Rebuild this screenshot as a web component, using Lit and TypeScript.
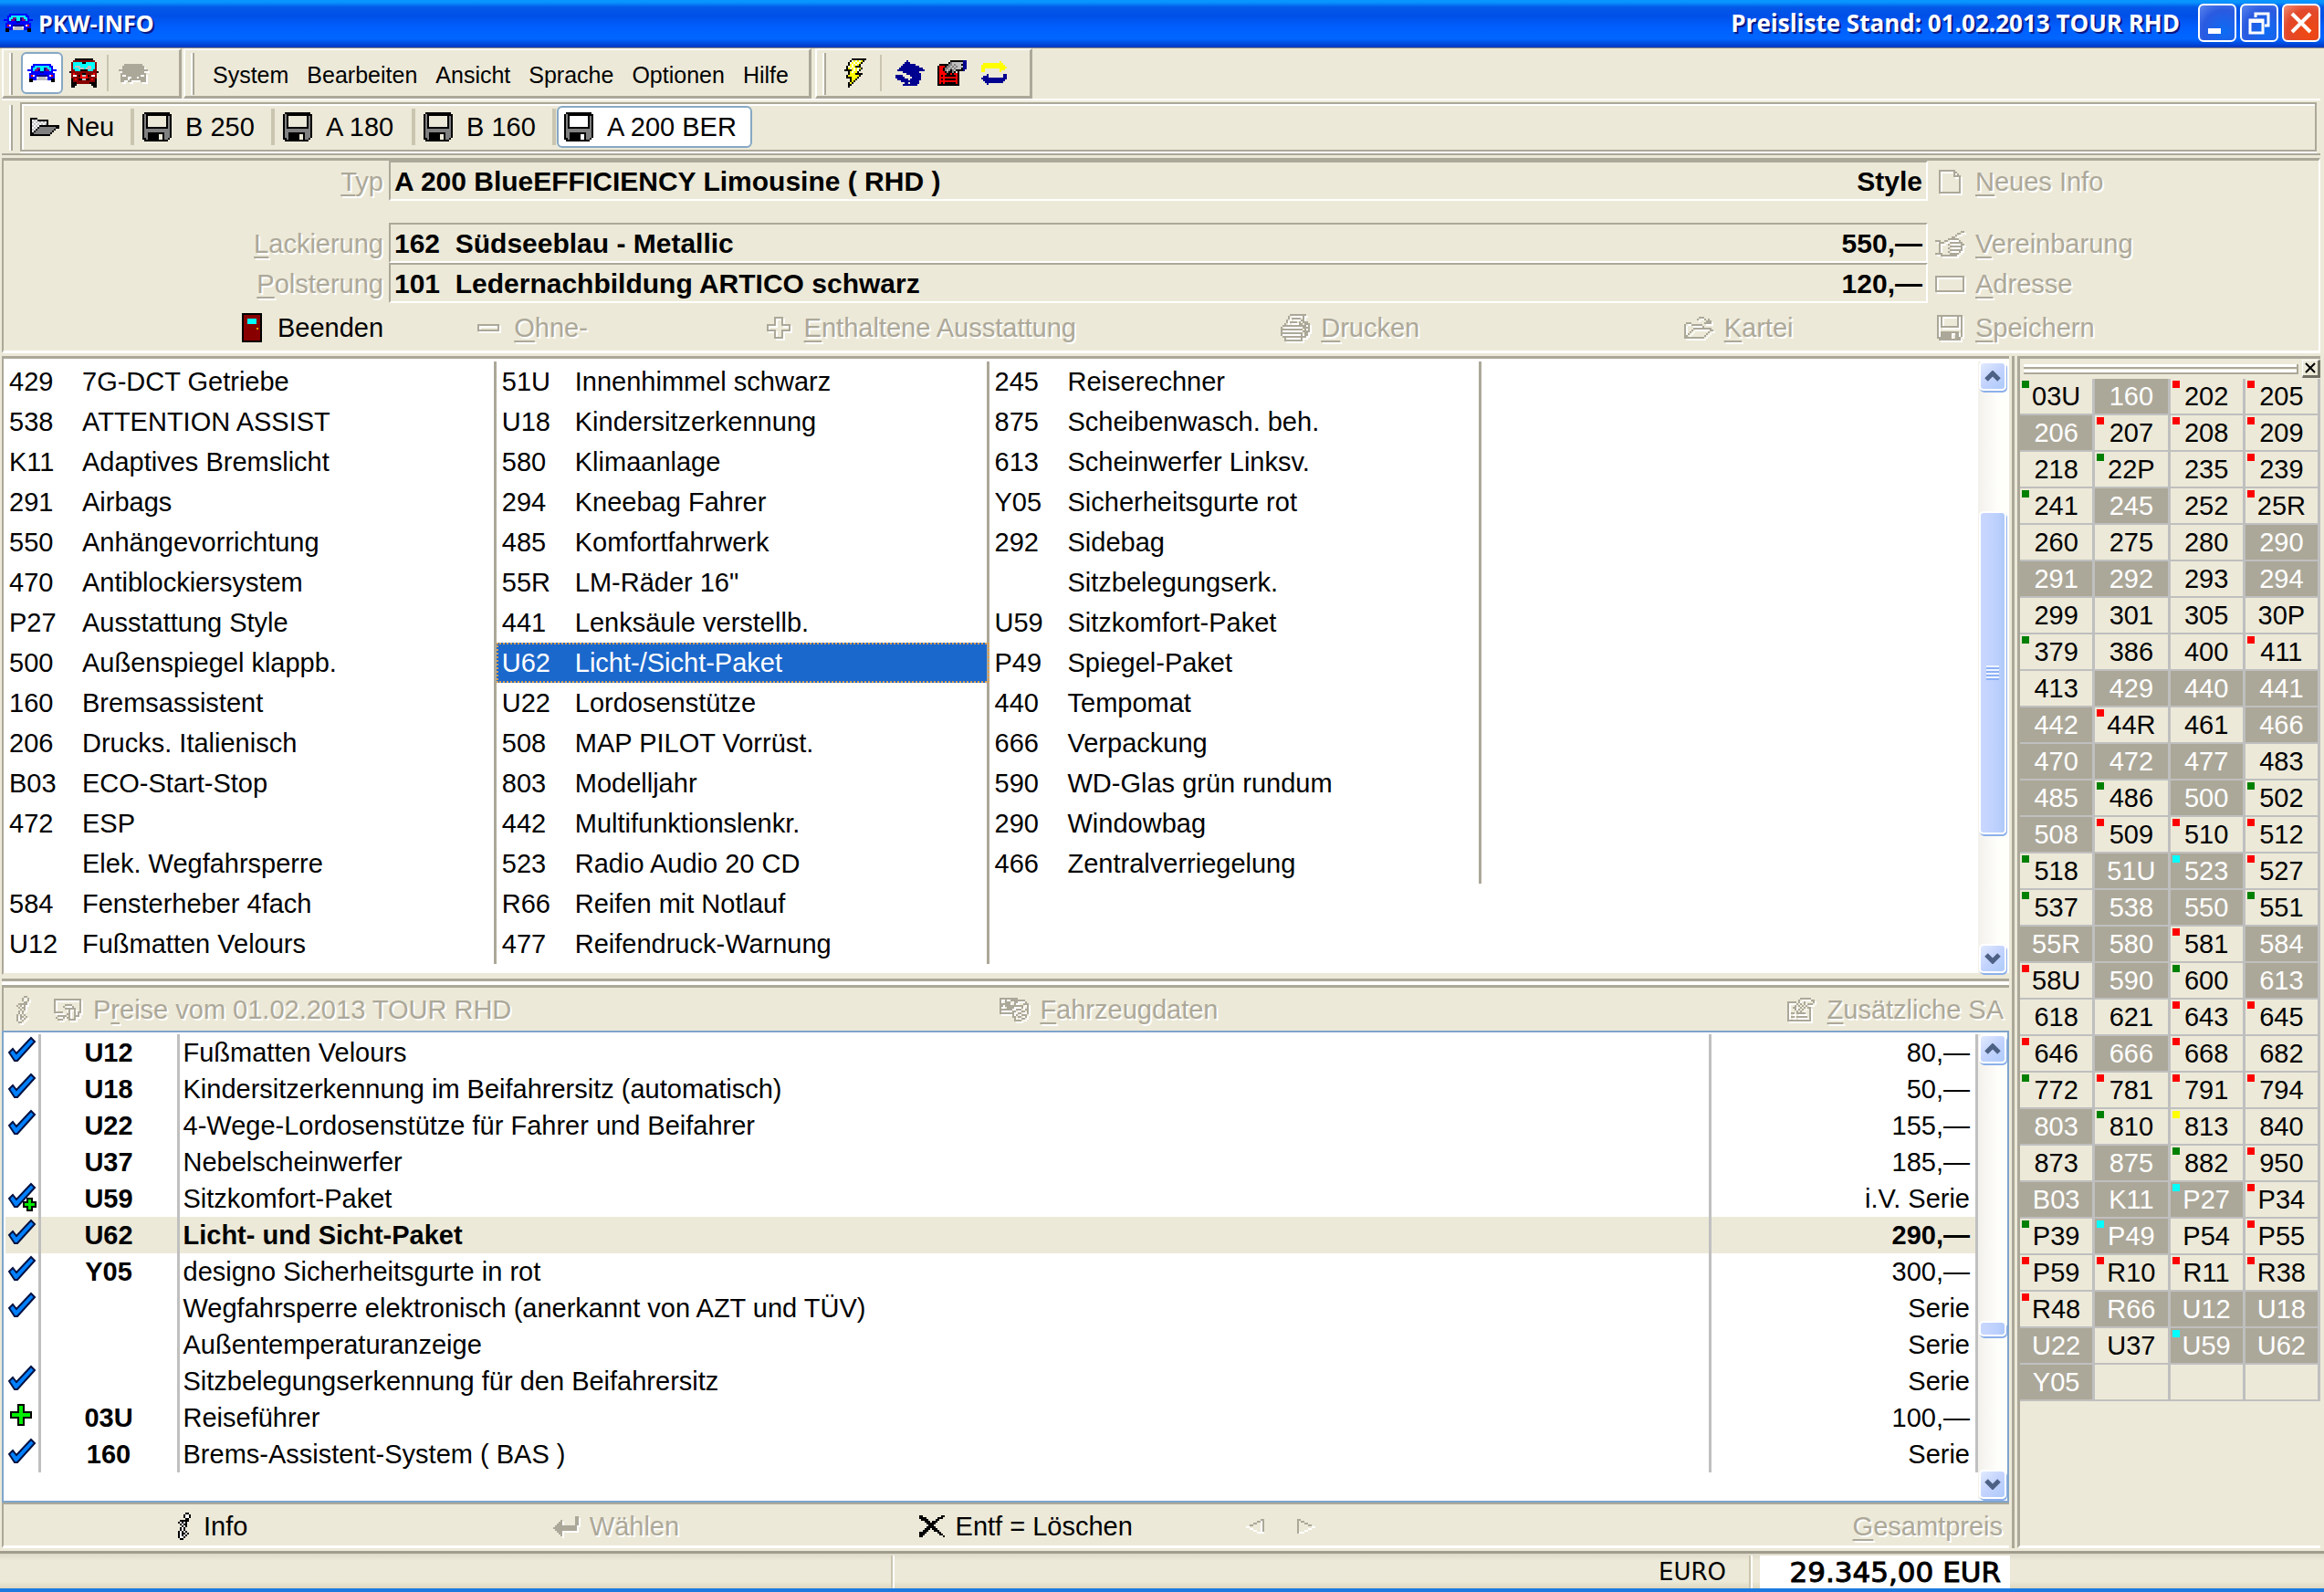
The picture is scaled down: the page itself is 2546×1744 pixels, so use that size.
import { LitElement, html, css, svg, nothing } from "lit";
import { customElement, property, state } from "lit/decorators.js";
import { classMap } from "lit/directives/class-map.js";

/* Pixel icons: one character per pixel, "." is transparent. */
const PALETTE: Record<string, string> = {
  k: "#000000", b: "#0000ff", c: "#00ffff", m: "#800080", r: "#ff0000", d: "#880000",
  w: "#ffffff", g: "#aca899", s: "#808080", l: "#c0c0c0", n: "#000090", y: "#ffff00", o: "#e8a000",
};

const BITMAPS: Record<string, string[]> = {
  car: [
    "...bbbbbbbbbb...",
    "..bbccccccccbb..",
    "..bccmmccnmccb..",
    "bbbcmmnccnmmcbbb",
    "..bbbbbnnbbbbb..",
    ".bbbbbbbbbbbbbb.",
    ".brwbnnnnnnbwrb.",
    ".bbbbwllllwbbbb.",
    ".kkbbllllllbbkk.",
    ".kk..........kk.",
  ],
  bus: [
    "...kkkkkkkkkk...",
    "..dddddddddddd..",
    ".dccccckkcccccd.",
    ".dccccccccccccd.",
    ".dclllccccllccd.",
    ".dccclllclllccd.",
    ".ddccckkkkcccdd.",
    "kddddddddddddddk",
    ".drddddkkddddrd.",
    ".dwwdkrllrkdwwd.",
    ".dddddrrrrddddd.",
    ".kdrdkkllkkdrdk.",
    ".kddddddddddddk.",
    ".kkkdddddddkkkk.",
    ".kkk........kkk.",
    ".kk..........kk.",
  ],
  van: [
    "...gggggggggg...",
    "..gggggggggggg..",
    "..gggggggggggg..",
    "gggggggggggggggg",
    "..gggggggggggg..",
    ".gggggggggggggg.",
    ".g..gggggggg..g.",
    ".gggg..ggg.gggg.",
    ".gggg.ggggggggg.",
    ".gg..gg.....ggg.",
  ],
  folder: [
    "kkkk............",
    "kwlwkkkkkk......",
    "klwlwlwlwk......",
    "kwlwlwlwlk......",
    "klwlwkkkkkkkkkkk",
    "kwlwkssssssssskk",
    "klwksssssssssk..",
    "kwksssssssssk...",
    "kksssssssssk....",
    "kkkkkkkkkkk.....",
  ],
  floppy: [
    ".kkkkkkkkkkkkkk.",
    "kskkkkkkkkkkkkkk",
    "ksk..........ksk",
    "ksk..........ksk",
    "ksk..........ksk",
    "ksk..........ksk",
    "ksk..........ksk",
    "ksk..........ksk",
    "kskkkkkkkkkkkksk",
    "kssssssssssssssk",
    "kssssssssssssssk",
    "ksskkkkkkkkksssk",
    "ksskkkkkk..ksssk",
    "ksskkkkkk..ksssk",
    "kkskkkkkk..kssk.",
    ".kkkkkkkkkkkkk..",
  ],
  flash: [
    "....kkkkkkkk",
    "...kwywywyk.",
    "..kwywywyk..",
    "..kywywyk...",
    ".kwywykkk...",
    ".kywywywyk..",
    "kkkkywywk...",
    "..kywyyk....",
    "..kyyykkkk..",
    ".kyyyyyyk...",
    ".kkkyyyk....",
    "...kyyk.....",
    "...kyk......",
    "..kyk.......",
    "..kk........",
    "..k.........",
  ],
  redo: [
    "......n.........",
    ".....nnn........",
    "....nnnnnnn.....",
    "...nnnnnnnnnn...",
    "..nnnnnnnnnnnnn.",
    ".nnnnnnnnnnnnnnn",
    "....nnnnnnnnn...",
    "......nnnnnnnn..",
    "nnnn....nnnnnn..",
    "nnnnn....nnnnn..",
    ".nnnnnn.nnnnnn..",
    "...nnnnnnnnnn...",
    ".....nn.nnnnn...",
    "....nnnnnnnn....",
  ],
  note: [
    ".......kkkkkkknn",
    "......ksllllllnn",
    ".kkkkksslslllknn",
    "krrrksslslslllnn",
    "krrksslslslllknn",
    "krrkslskslkkkkn.",
    "krrrkskksk.k....",
    "krrrrkkrkrrk....",
    "krkrkkkkkkrk....",
    "krrrrrrrrrrk....",
    "krkrkkkkkkrk....",
    "krrrrrrrrrrk....",
    "krkrkkkkkkrk....",
    "kkkkkkkkkkkk....",
  ],
  swap: [
    "..........y...",
    ".yyyyyyyyyyy..",
    "yyyyyyyyyyyyy.",
    "yyyyyyyyyyyyyy",
    "yy........yyy.",
    "yy........y...",
    "..............",
    "...n........nn",
    ".nnn........nn",
    "nnnnnnnnnnnnnn",
    ".nnnnnnnnnnnn.",
    "..nnnnnnnnnn..",
    "...n..........",
  ],
  door: [
    "kkkkkkkkkkk",
    "kdddddddddk",
    "kdddddddddk",
    "kddcccccddk",
    "kddcccccddk",
    "kddcccccddk",
    "kdddddddddk",
    "kdddddddddk",
    "kdddddddodk",
    "kdddddddddk",
    "kdddddddddk",
    "kdddddddddk",
    "kdddddddddk",
    "kdddddddddk",
    "kdddddddddk",
    "kkkkkkkkkkk",
  ],
  minus: ["gggggggggggg", "g..........g", "g..........g", "gggggggggggg"],
  plus: [
    "....ggggg....",
    "....g...g....",
    "....g...g....",
    "....g...g....",
    "ggggg...ggggg",
    "g...........g",
    "g...........g",
    "ggggg...ggggg",
    "....g...g....",
    "....g...g....",
    "....g...g....",
    "....ggggg....",
  ],
  printer: [
    ".....ggggggggg..",
    "....g.......g...",
    "....g.ggggg.g...",
    "...g.......gg...",
    "...g.gggg.g.ggg.",
    "..g.......gg.ggg",
    ".ggggggggggggg.g",
    "g...........gggg",
    "gggggggggggg.g.g",
    "g...........gggg",
    "gggggggggggg.gg.",
    "g..........g.gg.",
    ".ggggggggggggg..",
    "..g........g....",
    "..gggggggggg....",
  ],
  index: [
    "........ggg.....",
    ".......g...g.g..",
    "............ggg.",
    ".ggg.......gggg.",
    "g...gggggg......",
    "g.........g.....",
    "g....gggggggggg.",
    "g...g.........gg",
    "g..g.........g..",
    "g.g.........g...",
    "gg.........g....",
    "ggggggggggg.....",
  ],
  page: [
    "ggggggggg...",
    "g.......gg..",
    "g.......g.g.",
    "g.......gggg",
    "g..........g",
    "g..........g",
    "g..........g",
    "g..........g",
    "g..........g",
    "g..........g",
    "g..........g",
    "g..........g",
    "gggggggggggg",
  ],
  hand: [
    "..............gg",
    "............gg..",
    "...........g....",
    ".........gg.....",
    ".......gggggg...",
    "ggg..gg......g..",
    "..ggg...ggggggg.",
    "..g....g......gg",
    "..g.....ggggggg.",
    "..g....g......g.",
    "..g.....ggggggg.",
    "..g....g.....g..",
    "gggg....ggggg...",
    "...ggggggggg....",
  ],
  card: [
    "gggggggggggggggg",
    "g..............g",
    "g..............g",
    "g..............g",
    "g..............g",
    "g..............g",
    "g..............g",
    "g..............g",
    "gggggggggggggggg",
  ],
  disk: [
    "gggggggggggggg",
    "g.g........g.g",
    "g.g........g.g",
    "g.g........g.g",
    "g.g........g.g",
    "g.g........g.g",
    "g.gggggggggg.g",
    "g............g",
    "g............g",
    "g.gggggggggg.g",
    "g.gggggg..gg.g",
    "g.gggggg..gg.g",
    "gggggggg..ggg.",
    ".gggggggggggg.",
  ],
  money: [
    "ggggggggggggggg",
    "g.............g",
    "g.............g",
    "g.....gggg....g",
    "g....g....g...g",
    "g.....gggggg..g",
    "g.......g..g..g",
    "ggggg...g..g.gg",
    ".......gg..g.g.",
    "..ggggg.g..ggg.",
    ".g...g.gg..g...",
    "..ggg...gggg...",
  ],
  photos: [
    "gggggggggg......",
    "g..g..gggggggg..",
    "g..ggg..gg....g.",
    "gggggg..g....ggg",
    "gg.gggggggggg..g",
    "g...gggg....g..g",
    "ggggggg..ggg..gg",
    "g......gg...gg.g",
    "gggggggg..gg...g",
    ".......g.g..ggg.",
    ".......gg.gg..g.",
    "........g...gg..",
    "........gggg....",
  ],
  sheet: [
    ".......gggggg...",
    "......g......gg.",
    "ggggg.g..g....g.",
    "g....g.g.g.ggg..",
    "g...g.g.g.g.....",
    "g..gg..g.g.gg...",
    "g...g.g.g...g...",
    "g....g.g....g...",
    "g.gg.ggggg..g...",
    "g...........g...",
    "g.gg.gggggg.g...",
    "g...........g...",
    "ggggggggggggg...",
  ],
  info: [
    ".....kk..",
    "....kwwk.",
    "....kwwk.",
    ".....kk..",
    "..kkkkk..",
    ".kwkwk...",
    "..kwkk...",
    "...kwk...",
    "..kwk....",
    "..kwk....",
    ".kwk.k...",
    ".kwkkwk..",
    ".kwkwk...",
    ".kwwk....",
    "..kk.....",
  ],
  enter: [
    "............gg",
    "............gg",
    "....g.......gg",
    "...gg.......gg",
    "..ggg.......gg",
    ".gggggggggggg.",
    "ggggggggggggg.",
    ".gggggggggggg.",
    "..ggg.........",
    "...gg.........",
    "....g.........",
  ],
  cross: [
    "kk..........kk",
    "kkkk......kkk.",
    ".kkkk....kk...",
    "...kkk.kkk....",
    "....kkkkk.....",
    ".....kkk......",
    "....kkkkk.....",
    "...kkk.kkk....",
    "..kkk...kkk...",
    "kkkk......kk..",
    "kkk........kk.",
    "kk...........k",
  ],
  left: ["........gg", "......ggwg", "....gg..wg", "..gg....wg", "ww......wg", "..ww....wg", "....ww..wg", "......wwww"],
  right: ["gg........", "g.gg......", "g...gg....", "g.....gg..", "g.......ww", "g.....ww..", "g...ww....", "gwww......"],
};

function bitmap(name: string, className = "") {
  const rows = BITMAPS[name];
  const paths: Record<string, string> = {};
  rows.forEach((row, y) => {
    for (let x = 0; x < row.length; ) {
      const ch = row[x];
      let end = x + 1;
      while (end < row.length && row[end] === ch) end++;
      if (ch !== ".") paths[ch] = (paths[ch] ?? "") + `M${x} ${y}h${end - x}v1h-${end - x}z`;
      x = end;
    }
  });
  const w = Math.max(...rows.map((r) => r.length));
  return html`<svg class="bmp ${className}" width=${w * 2} height=${rows.length * 2} viewBox="0 0 ${w} ${rows.length}"
    shape-rendering="crispEdges" aria-hidden="true">
    ${Object.entries(paths).map(([ch, d]) => svg`<path class="ink-${ch}" fill=${PALETTE[ch]} d=${d}></path>`)}
  </svg>`;
}

const check = (plus = false) => html`<svg class="mark" width="34" height="32" viewBox="0 0 34 32" aria-hidden="true">
  <path d="M4 18L8 14L12 19L28 2L32 6L13 27H10Z" fill="#0080ff" stroke="#001040" stroke-width="2"></path>
  ${plus ? svg`<path d="M24 18h5v4h4v5h-4v4h-5v-4h-4v-5h4z" fill="#00e800" stroke="#000" stroke-width="2"></path>` : nothing}
</svg>`;

const addMark = html`<svg class="mark" width="34" height="32" viewBox="0 0 34 32" aria-hidden="true">
  <path d="M14 4h6v8h8v6h-8v8h-6v-8H6v-6h8z" fill="#00f000" stroke="#000" stroke-width="2"></path>
</svg>`;

const shared = css`
  .bmp { display: block; flex: none; }
  .off { color: #aca899; text-shadow: 2px 2px 0 #fff; }
  .off .bmp, .bmp.off { filter: drop-shadow(2px 2px 0 #fff); }
  .dim .ink-k { fill: #aca899; }
  .dim .ink-w { fill: none; }
  button, input, output {
    font: inherit; color: inherit; margin: 0; padding: 0; border: 0; background: none; border-radius: 0;
  }
  u { text-decoration-thickness: 2px; text-underline-offset: 4px; text-decoration-skip-ink: none; }
`;

/* ---------- scroll bar ---------- */
@customElement("scroll-strip")
export class ScrollStrip extends LitElement {
  @property({ type: Number }) before = 0;
  @property({ type: Number }) size = 0;
  static styles = css`
    :host { display: flex; flex-direction: column; width: 32px; flex: none; background: linear-gradient(90deg, #f3f1ec, #fefefb 70%); }
    button, .thumb {
      box-sizing: border-box; border: 2px solid #fff; border-radius: 5px; padding: 0; margin: 0 1px; flex: none;
      background: linear-gradient(135deg, #e1eafe, #c3d3fd 50%, #aecbfb); box-shadow: 1px 2px 0 #8cb0ea;
      display: flex; align-items: center; justify-content: center;
    }
    button { height: 32px; }
    .thumb { background: linear-gradient(90deg, #c9d7fe, #bcd0fd 70%, #aec8f7); }
    .track { flex: 1; display: flex; flex-direction: column; }
    .grip { width: 14px; height: 16px; background: repeating-linear-gradient(#eef4fe 0 2px, #8cb0f8 2px 4px); }
  `;
  render() {
    return html`
      <button aria-label="Nach oben"><svg width="18" height="12" viewBox="0 0 18 12"><path d="M2 10L9 3L16 10" fill="none" stroke="#4d6185" stroke-width="5"></path></svg></button>
      <div class="track">
        <div style="flex:${this.before} 0 0"></div>
        <div class="thumb" style="flex:${this.size} 0 0">${this.size > 10 ? html`<span class="grip"></span>` : nothing}</div>
        <div style="flex:${100 - this.before - this.size} 0 0"></div>
      </div>
      <button aria-label="Nach unten"><svg width="18" height="12" viewBox="0 0 18 12"><path d="M2 2L9 9L16 2" fill="none" stroke="#4d6185" stroke-width="5"></path></svg></button>
    `;
  }
}

/* ---------- data ---------- */
const EQUIPMENT = `429|7G-DCT Getriebe
538|ATTENTION ASSIST
K11|Adaptives Bremslicht
291|Airbags
550|Anhängevorrichtung
470|Antiblockiersystem
P27|Ausstattung Style
500|Außenspiegel klappb.
160|Bremsassistent
206|Drucks. Italienisch
B03|ECO-Start-Stop
472|ESP
|Elek. Wegfahrsperre
584|Fensterheber 4fach
U12|Fußmatten Velours
51U|Innenhimmel schwarz
U18|Kindersitzerkennung
580|Klimaanlage
294|Kneebag Fahrer
485|Komfortfahrwerk
55R|LM-Räder 16"
441|Lenksäule verstellb.
U62|Licht-/Sicht-Paket
U22|Lordosenstütze
508|MAP PILOT Vorrüst.
803|Modelljahr
442|Multifunktionslenkr.
523|Radio Audio 20 CD
R66|Reifen mit Notlauf
477|Reifendruck-Warnung
245|Reiserechner
875|Scheibenwasch. beh.
613|Scheinwerfer Linksv.
Y05|Sicherheitsgurte rot
292|Sidebag
|Sitzbelegungserk.
U59|Sitzkomfort-Paket
P49|Spiegel-Paket
440|Tempomat
666|Verpackung
590|WD-Glas grün rundum
290|Windowbag
466|Zentralverriegelung`.split("\n").map((l) => l.split("|"));

const PRICES = `c|U12|Fußmatten Velours|80,—
c|U18|Kindersitzerkennung im Beifahrersitz (automatisch)|50,—
c|U22|4-Wege-Lordosenstütze für Fahrer und Beifahrer|155,—
|U37|Nebelscheinwerfer|185,—
p|U59|Sitzkomfort-Paket|i.V. Serie
c|U62|Licht- und Sicht-Paket|290,—
c|Y05|designo Sicherheitsgurte in rot|300,—
c||Wegfahrsperre elektronisch (anerkannt von AZT und TÜV)|Serie
||Außentemperaturanzeige|Serie
c||Sitzbelegungserkennung für den Beifahrersitz|Serie
a|03U|Reiseführer|100,—
c|160|Brems-Assistent-System ( BAS )|Serie`.split("\n").map((l) => l.split("|"));

/* "*" = chosen; trailing letter after ":" is the marker colour */
const CODES = `03U:g *160 202:r 205:r
*206 207:r 208:r 209:r
218 22P:g 235 239:r
241:g *245 252 25R:r
260 275 280 *290
*291 *292 293 *294
299 301 305 30P
379:g 386 400 411:r
413 *429 *440 *441
*442 44R:r 461 *466
*470 *472 *477 483
*485 486:g *500 502:g
*508 509:r 510:r 512:r
518:g *51U *523:c 527:r
537:g *538 *550 551:g
*55R *580 581:r *584
58U:r *590 600:g *613
618 621 643:r 645:r
646:r *666 668:r 682
772:g 781:r 791:r 794:r
*803 810:g 813:y 840
873 *875 882:g 950:r
*B03 *K11 *P27:c P34:r
P39:g *P49:c P54 P55:r
P59:r R10:r R11:r R38:r
R48:r *R66 *U12 *U18
*U22 U37 *U59:c *U62
*Y05 - - -`.split(/\s+/);

/* ---------- code palette ---------- */
@customElement("code-palette")
export class CodePalette extends LitElement {
  static styles = [shared, css`
    :host { display: block; border-left: 3px solid #aca899; border-top: 3px solid #aca899; border-bottom: 3px solid #fff; background: #ece9d8; }
    .head { display: flex; align-items: center; height: 22px; padding: 0 0 0 4px; gap: 4px; }
    .rails { flex: 1; height: 11px; box-sizing: border-box; border-right: 2px solid #aca899;
      background: linear-gradient(#fff 0 3px, #aca899 3px 5px, #ece9d8 5px 6px, #fff 6px 9px, #aca899 9px 11px); }
    .close { width: 20px; height: 20px; box-sizing: border-box; border: solid; border-width: 1px 3px 3px 1px; border-color: #fff #716f64 #716f64 #fff;
      display: flex; align-items: center; justify-content: center; }
    .grid { display: grid; grid-template-columns: repeat(4, 1fr); grid-auto-rows: 40px; }
    .code { position: relative; box-sizing: border-box; border-right: 3px solid #bfbfbf; border-bottom: 2px solid #bfbfbf; text-align: center; line-height: 38px; color: #000; }
    .chosen { background: #aca899; color: #fff; }
    .flag { position: absolute; left: 2px; top: 2px; width: 8px; height: 8px; }
    .g { background: #008000; } .r { background: #f00; } .c { background: #0ff; } .y { background: #ff0; }
  `];
  render() {
    return html`
      <div class="head">
        <div class="rails"></div>
        <button class="close" aria-label="Schließen"><svg width="12" height="12" viewBox="0 0 12 12"><path d="M1 1L11 11M11 1L1 11" stroke="#000" stroke-width="2"></path></svg></button>
      </div>
      <div class="grid">
        ${CODES.map((c) => {
          if (c === "-") return html`<span class="code"></span>`;
          const chosen = c.startsWith("*");
          const [code, flag] = c.replace("*", "").split(":");
          return html`<button class=${classMap({ code: true, chosen })} aria-pressed=${chosen}>${flag ? html`<i class="flag ${flag}"></i>` : nothing}${code}</button>`;
        })}
      </div>`;
  }
}

/* ---------- application ---------- */
@customElement("app-root")
export class AppRoot extends LitElement {
  @state() private selected = "U62";

  static styles = [shared, css`
    :host {
      display: flex; flex-direction: column; min-height: 100vh; box-sizing: border-box; background: #ece9d8; color: #000;
      font: 29px/32px "Liberation Sans", Arial, sans-serif; border-bottom: 4px solid #1c7ae0; white-space: nowrap;
    }
    .title {
      display: flex; align-items: center; height: 52px; box-sizing: border-box; padding: 0 4px; gap: 6px; color: #fff; border-bottom: 2px solid #0a3cc8;
      background: linear-gradient(#0a96ff 0, #0894ff 5%, #0458e8 16%, #0050e8 35%, #0060ff 62%, #0066ff 85%, #0040d0 100%);
      font: bold 26px/32px "Trebuchet MS", "Open Sans", sans-serif; text-shadow: 2px 2px 0 #0a1883;
    }
    .title h1 { font: inherit; font-size: 25px; margin: 0; flex: 1; }
    .wins { display: flex; gap: 4px; padding-left: 14px; }
    .win { width: 42px; height: 42px; border: 2px solid #fff; border-radius: 6px; box-sizing: border-box; display: flex; align-items: center; justify-content: center;
      background: radial-gradient(circle at 70% 75%, #0c6cf4, #2a5ae0 60%, #5c86ee); }
    .win.x { background: radial-gradient(circle at 70% 75%, #f04810, #e2482a 60%, #f09078); }

    .bars { display: flex; height: 56px; box-sizing: border-box; border-top: 1px solid #8a887a; gap: 2px; padding-left: 2px; }
    .band { display: flex; align-items: center; box-sizing: border-box; border: solid; border-width: 2px 3px 3px 2px; border-color: #fff #aca899 #aca899 #fff; }
    .grip { align-self: stretch; width: 4px; margin: 3px 9px 1px 6px; box-sizing: border-box; border-left: 2px solid #fff; border-right: 2px solid #aca899; flex: none; }
    .tool { width: 46px; height: 46px; display: flex; align-items: center; justify-content: center; box-sizing: border-box; }
    .active { background: #fff; border: 2px solid #86a8c4; border-radius: 6px; }
    .sep { width: 2px; height: 40px; background: #c9c5b0; flex: none; }
    .modes { width: 197px; }
    .modes .sep { margin: 0 4px 0 2px; }
    .menu { font-size: 25px; width: 688px; }
    .menu button { padding: 4px 10px 0; height: 42px; }
    .menu .grip { margin-right: 10px; }
    .quick { margin-left: 2px; padding-right: 16px; }
    .quick .sep { margin: 0 8px 0 4px; }

    .files { display: flex; height: 62px; box-sizing: border-box; border-top: 2px solid #fff; border-bottom: 2px solid #aca899; padding: 2px 4px; margin: 0 4px 0 2px; }
    .files .grip { margin-left: 4px; margin-right: 8px; }
    .tabs { flex: 1; display: flex; align-items: center; box-sizing: border-box; border: 2px solid #aca899; box-shadow: inset 2px 2px 0 #fff, 0 2px 0 #fff; }
    .tabs button { display: flex; align-items: center; height: 46px; box-sizing: border-box; width: 150px; padding-left: 9px; gap: 15px; }
    .tabs .new { width: 119px; gap: 7px; }
    .tabs button.active { width: 214px; margin-left: 1px; padding-left: 6px; }
    .tabs .sep { width: 4px; }

    .head { display: grid; grid-template-columns: 422px 1fr 428px; margin: 3px 4px 0 2px; border: solid; border-width: 3px 2px 3px 2px; border-color: #aca899 #fff #fff #aca899;
      grid-template-rows: 42px 26px 42px 2px 42px 54px; align-content: start; }
    .cap { text-align: right; padding-right: 6px; align-self: center; padding-top: 4px; }
    .field { display: flex; align-items: center; box-sizing: border-box; height: 44px; font-weight: bold; font-size: 30px; border: 2px solid; border-color: #aca899 #fff #fff #aca899; padding: 2px 4px 0; }
    .field input { flex: 1; min-width: 0; outline: none; height: 36px; }
    .side { display: flex; align-items: center; gap: 12px; padding: 4px 0 0 8px; }
    .slot { width: 32px; display: flex; justify-content: center; flex: none; }
    .acts { grid-column: 1 / 3; display: grid; grid-template-columns: 259fr 317fr 566fr 441fr 267fr; padding: 4px 0 0 256px; align-items: center; }
    .acts button, .foot button, .info button { display: flex; align-items: center; gap: 12px; }
    .r1 { grid-row: 1; } .r3 { grid-row: 3; } .r5 { grid-row: 5; } .r6 { grid-row: 6; }

    .work { flex: 1; display: grid; grid-template-columns: 1fr 332px; padding: 3px 4px 0 2px; gap: 3px; }
    .left { display: flex; flex-direction: column; border-right: 3px solid #aca899; padding-right: 3px; }
    .list { display: flex; flex: none; border-top: 3px solid #aca899; border-left: 2px solid #aca899; background: #fff; padding: 3px 2px 0 0; border-bottom: 2px solid #ece9d8; }
    ul { list-style: none; margin: 0 4px 0 0; padding: 0 0 10px; flex: 1; display: grid; grid-template-columns: repeat(4, 1fr); grid-template-rows: repeat(15, 44px); grid-auto-flow: column; }
    li { display: flex; align-items: center; box-sizing: border-box; padding-left: 6px; border-right: 3px solid #aca899; cursor: default; }
    li .code { width: 80px; flex: none; }
    li.on { background: #1b68cc; color: #fff; background-clip: padding-box; outline: 2px dotted #e0a050; outline-offset: -2px; }
    .rule { height: 3px; margin-top: 4px; background: #aca899; border-bottom: 4px solid #fff; flex: none; }
    .info { display: flex; align-items: center; height: 50px; box-sizing: border-box; border: solid #aca899; border-width: 3px 0 0 2px; padding: 0 6px 0 12px; flex: none; }
    .info .i { width: 42px; }
    .info .fill { flex: 1; display: flex; justify-content: center; padding-right: 88px; }
    .grid { display: flex; flex: 1; border: 2px solid #7fa5cc; background: #fff; padding: 2px 0 2px 2px; }
    table { flex: 1; border-collapse: collapse; align-self: flex-start; table-layout: fixed; width: 100%; }
    td { height: 40px; padding: 0; box-sizing: border-box; border-right: 3px solid #c0c0c0; line-height: 38px; }
    td.m { width: 37px; } td.c { width: 152px; text-align: center; font-weight: bold; }
    td.t { padding-left: 4px; } td.p { width: 292px; text-align: right; padding-right: 6px; }
    tr.on td { background: #ece9d8; font-weight: bold; }
    .mark { display: block; margin: 0 0 4px 0; }
    .foot { display: grid; grid-template-columns: 413fr 401fr 359fr 56fr 56fr 717fr; align-items: center; height: 50px; box-sizing: border-box; border: solid; border-width: 2px 0 3px 2px; border-color: #aca899 #fff #fff #aca899; padding: 2px 7px 0 189px; flex: none; }
    .foot .total { justify-self: end; }

    .status { display: grid; grid-template-columns: 979fr 940fr 284px; height: 41px; box-sizing: border-box; border-top: 3px solid #a09d8e; margin-top: 3px; padding: 2px 344px 0 0; font-family: "DejaVu Sans", Verdana, sans-serif;
      background: linear-gradient(#dcd9c8, #ece9d8 20%, #ece9d8 80%, #dcd8c0); font-size: 26px; line-height: 36px; }
    .status .cell { border-right: 2px solid #c9c5b0; box-shadow: 2px 0 0 #fff; }
    .status .cur { text-align: right; padding-right: 25px; }
    .status .sum { margin-left: 10px; background: #fff; text-align: right; padding-right: 10px; font-size: 31px; -webkit-text-stroke: 1px #000; }
  `];

  private act(icon: string, key: string, rest: string, cls = "", before = "") {
    return html`<button class="off ${cls}" disabled><span class="slot">${bitmap(icon)}</span><span>${before}<u>${key}</u>${rest}</span></button>`;
  }

  render() {
    return html`
      <header class="title">
        ${bitmap("car")}
        <h1>PKW-INFO</h1>
        <span>Preisliste Stand: 01.02.2013 TOUR RHD</span>
        <div class="wins">
          <button class="win" aria-label="Minimieren"><svg width="30" height="30" viewBox="0 0 30 30"><path d="M5 21h14v6H5z" fill="#fff"></path></svg></button>
          <button class="win" aria-label="Wiederherstellen"><svg width="30" height="30" viewBox="0 0 30 30"><path d="M11 9V5h14v13h-4M5 12h14v14H5z" fill="none" stroke="#fff" stroke-width="3"></path><path d="M4 11h16v4H4z" fill="#fff"></path></svg></button>
          <button class="win x" aria-label="Beenden"><svg width="30" height="30" viewBox="0 0 30 30"><path d="M5 5L25 25M25 5L5 25" stroke="#fff" stroke-width="4"></path></svg></button>
        </div>
      </header>

      <div class="bars">
        <div class="band modes"><span class="grip"></span>
          <button class="tool active" aria-label="PKW">${bitmap("car")}</button>
          <button class="tool" aria-label="Bus">${bitmap("bus")}</button><span class="sep"></span>
          <button class="tool" aria-label="Transporter" disabled>${bitmap("van", "off")}</button>
        </div>
        <nav class="band menu"><span class="grip"></span>
          ${["System", "Bearbeiten", "Ansicht", "Sprache", "Optionen", "Hilfe"].map((m) => html`<button>${m}</button>`)}
        </nav>
        <div class="band quick"><span class="grip"></span>
          <button class="tool" aria-label="Schnellinfo">${bitmap("flash")}</button><span class="sep"></span>
          <button class="tool" aria-label="Zurück">${bitmap("redo")}</button>
          <button class="tool" aria-label="Notiz">${bitmap("note")}</button>
          <button class="tool" aria-label="Tauschen">${bitmap("swap")}</button>
        </div>
      </div>

      <div class="files"><span class="grip"></span>
        <div class="tabs">
          <button class="new">${bitmap("folder")}Neu</button>
          ${["B 250", "A 180", "B 160"].map((t) => html`<span class="sep"></span><button>${bitmap("floppy")}${t}</button>`)}
          <span class="sep"></span><button class="active">${bitmap("floppy")}A 200 BER</button>
        </div>
      </div>

      <section class="head">
        <label class="cap off r1" for="typ"><u>T</u>yp</label>
        <div class="field r1"><input id="typ" readonly value="A 200 BlueEFFICIENCY Limousine ( RHD )"><output>Style</output></div>
        ${this.act("page", "N", "eues Info", "side r1")}
        <label class="cap off r3" for="lack"><u>L</u>ackierung</label>
        <div class="field r3"><input id="lack" readonly value="162  Südseeblau - Metallic"><output>550,—</output></div>
        ${this.act("hand", "V", "ereinbarung", "side r3")}
        <label class="cap off r5" for="polster"><u>P</u>olsterung</label>
        <div class="field r5"><input id="polster" readonly value="101  Ledernachbildung ARTICO schwarz"><output>120,—</output></div>
        ${this.act("card", "A", "dresse", "side r5")}
        <div class="acts r6">
          <button><span class="slot">${bitmap("door")}</span>Beenden</button>
          ${this.act("minus", "O", "hne-")}
          ${this.act("plus", "E", "nthaltene Ausstattung")}
          ${this.act("printer", "D", "rucken")}
          ${this.act("index", "K", "artei")}
        </div>
        ${this.act("disk", "S", "peichern", "side r6")}
      </section>

      <main class="work">
        <div class="left">
          <div class="list">
            <ul role="listbox" aria-label="Ausstattung">
              ${EQUIPMENT.map(([code, name]) => html`<li role="option" aria-selected=${code === this.selected} class=${classMap({ on: code === this.selected })}
                @click=${() => { if (code) this.selected = code; }}><span class="code">${code}</span>${name}</li>`)}
            </ul>
            <scroll-strip before="22" size="58"></scroll-strip>
          </div>
          <div class="rule"></div>
          <div class="info">
            <button class="off i" disabled aria-label="Info">${bitmap("info", "dim")}</button>
            ${this.act("money", "r", "eise vom 01.02.2013 TOUR RHD", "", "P")}
            <div class="fill">${this.act("photos", "F", "ahrzeugdaten")}</div>
            ${this.act("sheet", "Z", "usätzliche SA")}
          </div>
          <div class="grid">
            <table>
              <tbody>
                ${PRICES.map(([mark, code, text, price]) => html`<tr class=${code === "U62" ? "on" : ""}>
                  <td class="m">${mark === "a" ? addMark : mark ? check(mark === "p") : nothing}</td>
                  <td class="c">${code}</td><td class="t">${text}</td><td class="p">${price}</td>
                </tr>`)}
              </tbody>
            </table>
            <scroll-strip before="64" size="3"></scroll-strip>
          </div>
          <div class="foot">
            <button>${bitmap("info")}Info</button>
            <button class="off" disabled>${bitmap("enter")}Wählen</button>
            <button>${bitmap("cross")}Entf = Löschen</button>
            <button disabled aria-label="Vorheriger">${bitmap("left")}</button>
            <button disabled aria-label="Nächster">${bitmap("right")}</button>
            <span class="off total"><u>G</u>esamtpreis</span>
          </div>
        </div>
        <code-palette></code-palette>
      </main>

      <footer class="status">
        <div class="cell"></div>
        <div class="cell cur">EURO</div>
        <div class="sum">29.345,00 EUR</div>
      </footer>
    `;
  }
}
